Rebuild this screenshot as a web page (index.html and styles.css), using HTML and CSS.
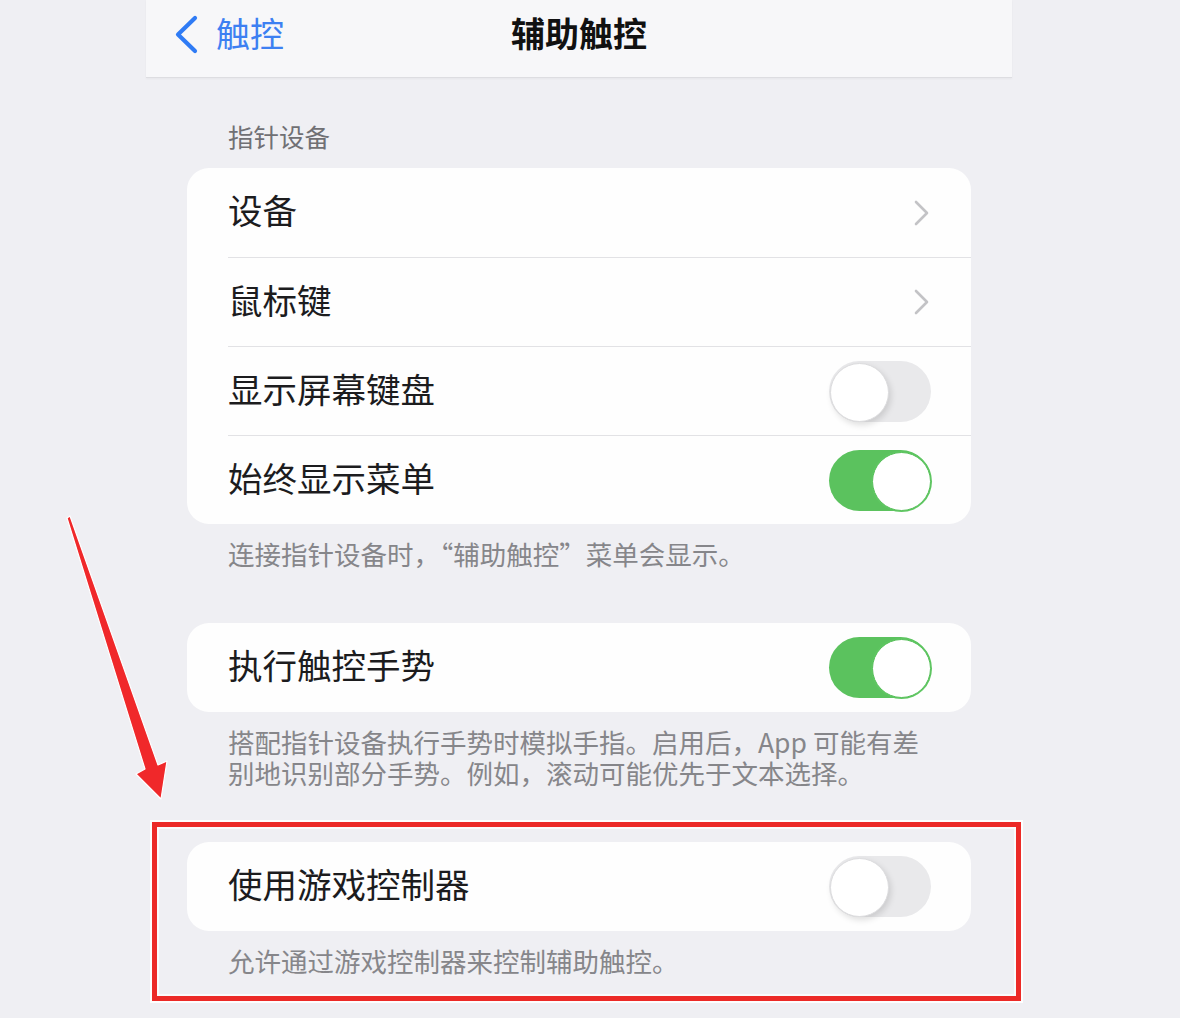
FILE: index.html
```html
<!DOCTYPE html>
<html lang="zh-CN">
<head>
<meta charset="utf-8">
<title>辅助触控</title>
<link rel="stylesheet" href="styles.css">
</head>
<body>
<div class="screen">
  <header class="nav">
    <a class="back" href="#">
      <svg class="back-icon" width="28" height="40" viewBox="0 0 28 40" aria-hidden="true">
        <path d="M22 3 L5 19.5 L22 36" fill="none" stroke="#2f7bf5" stroke-width="4.2" stroke-linecap="round" stroke-linejoin="round"/>
      </svg>
      <span>触控</span>
    </a>
    <h1 class="nav-title">辅助触控</h1>
    <span class="nav-spacer"></span>
  </header>

  <main class="content">
    <section class="group">
      <h2 class="group-title">指针设备</h2>
      <div class="card">
        <div class="row">
          <span class="label">设备</span>
          <svg class="chevron" width="18" height="28" viewBox="0 0 18 28" aria-hidden="true">
            <path d="M4 3 L15 14 L4 25" fill="none" stroke="#c3c3c6" stroke-width="2.6" stroke-linecap="round" stroke-linejoin="round"/>
          </svg>
        </div>
        <div class="row">
          <span class="label">鼠标键</span>
          <svg class="chevron" width="18" height="28" viewBox="0 0 18 28" aria-hidden="true">
            <path d="M4 3 L15 14 L4 25" fill="none" stroke="#c3c3c6" stroke-width="2.6" stroke-linecap="round" stroke-linejoin="round"/>
          </svg>
        </div>
        <div class="row">
          <span class="label">显示屏幕键盘</span>
          <span class="switch"></span>
        </div>
        <div class="row">
          <span class="label">始终显示菜单</span>
          <span class="switch on"></span>
        </div>
      </div>
      <p class="note">连接指针设备时，“辅助触控”菜单会显示。</p>
    </section>

    <section class="group spaced">
      <div class="card">
        <div class="row">
          <span class="label">执行触控手势</span>
          <span class="switch on"></span>
        </div>
      </div>
      <p class="note">搭配指针设备执行手势时模拟手指。启用后，App 可能有差别地识别部分手势。例如，滚动可能优先于文本选择。</p>
    </section>

    <section class="group spaced">
      <div class="card">
        <div class="row">
          <span class="label">使用游戏控制器</span>
          <span class="switch"></span>
        </div>
      </div>
      <p class="note">允许通过游戏控制器来控制辅助触控。</p>
    </section>
  </main>
</div>

<div class="callout"></div>
<svg class="pointer" width="1180" height="1018" viewBox="0 0 1180 1018" aria-hidden="true">
  <polygon points="67,518 70,516 158,765 167,761 161,799 136,774 145,769" fill="#f0282a" stroke="#ffffff" stroke-width="1.2" stroke-linejoin="round"/>
</svg>
</body>
</html>
```

FILE: styles.css
```css
* {
  box-sizing: border-box;
}

html, body {
  margin: 0;
  padding: 0;
}

body {
  width: 1180px;
  height: 1018px;
  overflow: hidden;
  background: #efeff3;
  font-family: "Noto Sans CJK SC", "Noto Sans", sans-serif;
  color: #1d1d1f;
  position: relative;
}

.screen {
  margin-left: 146px;
  width: 866px;
}

/* navigation bar */
.nav {
  height: 78px;
  display: grid;
  grid-template-columns: 1fr auto 1fr;
  align-items: center;
  padding: 0 27px 12px;
  background: #f7f7f9;
  border-bottom: 1px solid #dddde1;
  box-shadow: 0 1px 2px rgba(0, 0, 0, 0.04);
}

.back {
  display: flex;
  align-items: center;
  gap: 15px;
  color: #3d80f2;
  text-decoration: none;
  font-size: 34px;
  line-height: 40px;
}

.back-icon {
  display: block;
  margin-top: 4px;
}

.nav-title {
  margin: 0;
  font-size: 34px;
  font-weight: 700;
  line-height: 40px;
  color: #111;
}

/* list content */
.content {
  padding: 0 41px;
}

.group-title {
  margin: 42px 0 16px 41px;
  font-size: 25.5px;
  font-weight: 400;
  line-height: 32px;
  color: #707074;
}

.group.spaced {
  margin-top: 51px;
}

.card {
  background: #fefefe;
  border-radius: 22px;
  overflow: hidden;
}

.row {
  height: 89px;
  margin-left: 41px;
  padding-right: 40px;
  display: flex;
  align-items: center;
  justify-content: space-between;
}

.row + .row {
  border-top: 1px solid #e2e2e5;
}

.label {
  font-size: 34.5px;
  line-height: 44px;
  color: #1c1c1e;
  margin-bottom: 7px;
}

.chevron {
  display: block;
  margin-right: 1px;
}

.note {
  margin: 0;
  padding: 14px 41px 3px;
  font-size: 26.5px;
  line-height: 31px;
  color: #86868a;
}

/* toggle switch */
.switch {
  position: relative;
  width: 102px;
  height: 61px;
  border-radius: 31px;
  background: #e9e9eb;
  flex: none;
}

.switch::after {
  content: "";
  position: absolute;
  top: 2px;
  left: 1px;
  width: 57px;
  height: 57px;
  border-radius: 50%;
  background: #ffffff;
  border: 1px solid #dcdcde;
  box-shadow: 2px 3px 6px rgba(0, 0, 0, 0.13);
}

.switch.on {
  background: #5bc25e;
}

.switch.on::after {
  left: 43px;
  border-color: #56bf59;
  box-shadow: 0 0 0 1px #5fc762;
}

/* red annotation frame and arrow */
.callout {
  position: absolute;
  left: 152px;
  top: 822px;
  width: 869px;
  height: 179px;
  border: 5px solid #ec2a27;
  box-shadow: 0 0 0 2px rgba(255, 255, 255, 0.9), inset 0 0 0 2px rgba(255, 255, 255, 0.75);
  pointer-events: none;
}

.pointer {
  position: absolute;
  left: 0;
  top: 0;
  pointer-events: none;
}
```
